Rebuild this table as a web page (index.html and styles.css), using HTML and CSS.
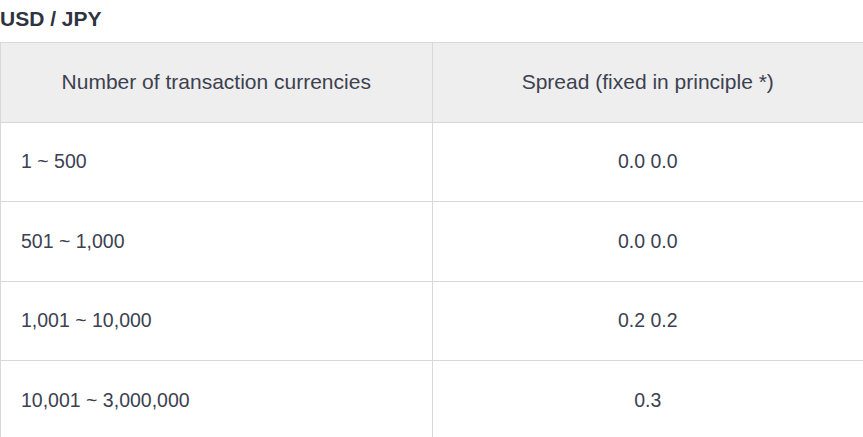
FILE: index.html
```html
<!DOCTYPE html>
<html>
<head>
<meta charset="utf-8">
<link rel="stylesheet" href="styles.css">
</head>
<body>
<h3 class="title">USD / JPY</h3>
<table class="spread">
  <thead>
    <tr><th>Number of transaction currencies</th><th>Spread (fixed in principle *)</th></tr>
  </thead>
  <tbody>
    <tr><td>1 ~ 500</td><td class="num">0.0 0.0</td></tr>
    <tr><td>501 ~ 1,000</td><td class="num">0.0 0.0</td></tr>
    <tr><td>1,001 ~ 10,000</td><td class="num">0.2 0.2</td></tr>
    <tr><td>10,001 ~ 3,000,000</td><td class="num">0.3</td></tr>
  </tbody>
</table>
</body>
</html>
```
FILE: styles.css
```css
html, body {
  margin: 0;
  padding: 0;
  background: #fff;
}
body {
  font-family: "Liberation Sans", Arial, sans-serif;
  color: #3c4150;
  overflow: hidden;
}
.title {
  margin: 0;
  padding-top: 6px;
  height: 36px;
  font-size: 21px;
  line-height: 25px;
  font-weight: bold;
  color: #2e3340;
  box-sizing: border-box;
}
.spread {
  border-collapse: collapse;
  width: 864px;
  margin-top: 6px;
  table-layout: fixed;
  font-size: 21px;
}
.spread th, .spread td {
  border: 1px solid #d8d8d8;
  height: 79.5px;
  padding: 0 20px;
  box-sizing: border-box;
}
.spread th {
  background: #eeeeee;
  font-weight: normal;
  text-align: center;
}
.spread td {
  font-size: 19.5px;
  text-align: left;
}
.spread td.num {
  text-align: center;
}
```
